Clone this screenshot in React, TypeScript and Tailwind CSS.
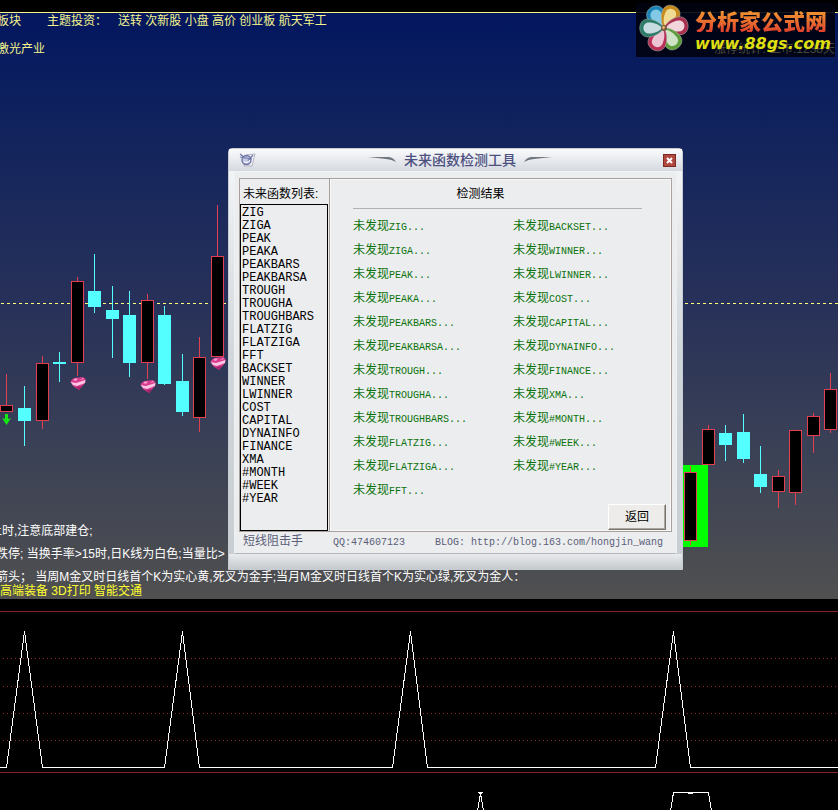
import { type ReactNode } from 'react'

type Candle = {
  x: number
  top: number
  bottom: number
  high: number
  low: number
  up?: boolean
}

const candles: Candle[] = [
  { x: 0, top: 405, bottom: 411, high: 374, low: 411, up: true },
  { x: 18, top: 408, bottom: 421, high: 386, low: 446 },
  { x: 36, top: 363, bottom: 420, high: 356, low: 429, up: true },
  { x: 53, top: 362, bottom: 364, high: 352, low: 382 },
  { x: 71, top: 281, bottom: 362, high: 277, low: 376, up: true },
  { x: 88, top: 291, bottom: 307, high: 254, low: 313 },
  { x: 106, top: 310, bottom: 319, high: 286, low: 358 },
  { x: 123, top: 315, bottom: 363, high: 291, low: 377 },
  { x: 141, top: 300, bottom: 362, high: 294, low: 379, up: true },
  { x: 158, top: 315, bottom: 384, high: 306, low: 385 },
  { x: 176, top: 381, bottom: 412, high: 354, low: 416 },
  { x: 193, top: 357, bottom: 417, high: 337, low: 432, up: true },
  { x: 211, top: 256, bottom: 356, high: 205, low: 357, up: true },
  { x: 684, top: 472, bottom: 540, high: 466, low: 545, up: true },
  { x: 702, top: 429, bottom: 464, high: 425, low: 465, up: true },
  { x: 719, top: 433, bottom: 445, high: 425, low: 461 },
  { x: 737, top: 432, bottom: 459, high: 414, low: 463 },
  { x: 754, top: 474, bottom: 487, high: 446, low: 493 },
  { x: 772, top: 476, bottom: 491, high: 470, low: 508, up: true },
  { x: 789, top: 430, bottom: 492, high: 430, low: 505, up: true },
  { x: 807, top: 416, bottom: 435, high: 413, low: 453, up: true },
  { x: 824, top: 389, bottom: 429, high: 373, low: 433, up: true },
]

const gems = [
  { x: 78, y: 383 },
  { x: 148, y: 386 },
  { x: 218, y: 363 },
]

const functions = [
  'ZIG', 'ZIGA', 'PEAK', 'PEAKA', 'PEAKBARS', 'PEAKBARSA', 'TROUGH', 'TROUGHA',
  'TROUGHBARS', 'FLATZIG', 'FLATZIGA', 'FFT', 'BACKSET', 'WINNER', 'LWINNER', 'COST',
  'CAPITAL', 'DYNAINFO', 'FINANCE', 'XMA', '#MONTH', '#WEEK', '#YEAR',
]

export default function App() {
  return (
    <div className="relative flex min-h-screen flex-col overflow-hidden bg-black font-['Liberation_Sans','Noto_Sans_CJK_SC',sans-serif] text-xs">
      <PriceChart />
      <IndicatorChart />
      <SiteBadge />
      <DetectorDialog />
    </div>
  )
}

function PriceChart() {
  return (
    <section className="relative mt-3 flex h-[587px] flex-col overflow-hidden border-t border-[#f3f38a] bg-linear-to-b from-[#03165f] via-[#283159] to-[#505050]">
      <CandleLayer />
      <div className="relative -ml-[3px] flex whitespace-pre leading-4 text-[#f4f48c]">
        <span className="w-[50px]">板块</span>
        <span className="w-[71px]">主题投资：</span>
        <span>送转 次新股 小盘 高价 创业板 航天军工</span>
      </div>
      <p className="relative -ml-[3px] mt-3 leading-4 text-[#f4f48c]">激光产业</p>

      <div className="relative mt-auto whitespace-nowrap pb-0.5 leading-[15px] text-white">
        <p className="-ml-2.5">上时,注意底部建仓;</p>
        <p className="-ml-1 mt-2">跌停; 当换手率&gt;15时,日K线为白色;当量比&gt;</p>
        <p className="-ml-1 mt-2">箭头； 当周M金叉时日线首个K为实心黄,死叉为金手;当月M金叉时日线首个K为实心绿,死叉为金人：</p>
        <p className="leading-3 text-[#ffff30]">高端装备 3D打印 智能交通</p>
      </div>
    </section>
  )
}

function CandleLayer() {
  return (
    <svg className="absolute inset-0 h-full w-full" shapeRendering="crispEdges" aria-hidden="true">
      {/* prices are plotted in page rows, the section starts at row 13 */}
      <g transform="translate(0 -13)">
        <line x1="1" x2="100%" y1="303.5" y2="303.5" stroke="#ffff80" strokeDasharray="3 3" />
        <rect x="683" y="465" width="25" height="82" fill="#00ff00" />
        {candles.map((c) => (
          <g key={c.x} stroke={c.up ? '#e04050' : '#54ffff'}>
            <line x1={c.x + 6.5} x2={c.x + 6.5} y1={c.high} y2={c.low} />
            {c.up ? (
              <rect x={c.x + 0.5} y={c.top + 0.5} width="12" height={c.bottom - c.top} fill="#000" />
            ) : (
              <rect x={c.x} y={c.top} width="13" height={c.bottom - c.top} fill="#54ffff" stroke="none" />
            )}
          </g>
        ))}
        {gems.map((g) => (
          <g key={g.x} transform={`translate(${g.x} ${g.y})`} shapeRendering="auto">
            <path d="M-7.5 -2 -4 -5 5 -6 7.5 -4 7 0 1 7 -5 3z" fill="#d73b8c" />
            <path d="M-7.5 -1 -2 0 7.5 -3 7 0 -1 3 -5 2z" fill="#ffc4e4" />
            <path d="M-5 -3 -3 -4.5 0 -4.5 -2 -2z M2 -3 5 -5 6 -4z" fill="#ff9ad0" />
            <path d="M-2 4 1 7 4 3z" fill="#a8216a" />
          </g>
        ))}
        <path d="M5 414h3v5l3-1-4.500 7L2 418l3 1z" fill="#16e816" shapeRendering="auto" />
      </g>
    </svg>
  )
}

function IndicatorChart() {
  return (
    <section className="grow">
      <svg className="block h-[211px] w-full" shapeRendering="crispEdges" role="img" aria-label="指标">
        <g stroke="#8a2424">
          <line x1="0" x2="100%" y1="12.5" y2="12.5" />
          <line x1="0" x2="100%" y1="173.5" y2="173.5" />
        </g>
        <g stroke="#8a2a2a" strokeDasharray="1 3">
          <line x1="3" x2="100%" y1="59.5" y2="59.5" />
          <line x1="3" x2="100%" y1="87.5" y2="87.5" />
          <line x1="3" x2="100%" y1="114.5" y2="114.5" />
          <line x1="3" x2="100%" y1="141.5" y2="141.5" />
        </g>
        <g fill="none" stroke="#fff">
          <path d="M0 168.5H6.5L24.5 32.5 42.5 168.5H164.5L182.5 32.5 199.5 168.5H392.5L410.5 32.5 427.5 168.5H655.5L673.5 32.5 690.5 168.5H4000" />
          <path d="M477.5 212 480.5 194.5 483.5 212M478 193.5h5M479 194.5h3" />
          <path d="M670.5 212 673.5 193.5H708.5L711.5 212M688 194.5h5" />
        </g>
      </svg>
    </section>
  )
}

function SiteBadge() {
  const petals = [
    { angle: -32, outer: '#1b83b5', inner: '#83c9e6' },
    { angle: 26, outer: '#c98a1c', inner: '#f1dc96' },
    { angle: 82, outer: '#a9304f', inner: '#f3d6dc' },
    { angle: 146, outer: '#5f9e3c', inner: '#cfe4c6' },
    { angle: 206, outer: '#b92f58', inner: '#ecc4d4' },
    { angle: 270, outer: '#2c7b68', inner: '#c6dce0' },
  ]

  return (
    <a
      href="#"
      className="absolute right-[3px] top-[3px] flex h-[54px] w-[199px] items-center bg-[#00020f]/90"
    >
      <svg className="h-[54px] w-[56px] shrink-0" viewBox="0 0 56 54" aria-hidden="true">
        {petals.map((p) => (
          <g key={p.angle} transform={`rotate(${p.angle} 28 25)`}>
            <path d="M28 25C23 22 19 15 19 9 19 -2 37 -2 37 9 37 15 33 22 28 25z" fill={p.outer} stroke="#aeb8a8" strokeWidth=".5" />
            <path d="M28 23C24 20 22.500 14 22.500 10 22.500 2.500 33.500 2.500 33.500 10 33.500 14 32 20 28 23z" fill={p.inner} />
          </g>
        ))}
        <circle cx="28" cy="25" r="3" fill="#7a5a3e" />
        <circle cx="27.5" cy="24.5" r="1.4" fill="#e7b36b" />
      </svg>
      <span className="absolute bottom-0 right-0 text-xs leading-4 text-[#47473c]">
        涨停统计: 上市:1238天
      </span>
      <span className="relative ml-[3px] flex flex-col whitespace-nowrap pt-1">
        <span className="bg-linear-to-b from-[#f0a030] to-[#e0402c] bg-clip-text font-['Noto_Sans_CJK_SC',sans-serif] text-[22px] leading-6 font-black text-transparent">
          分析家公式网
        </span>
        <span className="font-['DejaVu_Sans',sans-serif] text-base leading-6 font-bold italic text-[#dede10]">
          www.88gs.com
        </span>
      </span>
    </a>
  )
}

function DetectorDialog() {
  return (
    <div
      role="dialog"
      aria-labelledby="detector-title"
      className="absolute left-[228px] top-[148px] flex w-[455px] flex-col rounded-t-sm border border-[#c6ccd4] bg-linear-to-b from-[#f6f7f9] via-[#d0d6da] to-[#c8cdd1] text-black"
    >
      <header className="flex h-[22px] items-center bg-linear-to-b from-[#fbfbfc] via-[#e8eaee] to-[#d5d9e0] pl-2.5 pr-1.5">
        <TitleIcon />
        <div className="flex flex-1 items-center justify-center gap-2">
          <svg className="h-2 w-7" viewBox="0 0 28 8" aria-hidden="true">
            <path d="M0 1H20Q25 1 28 6 24 3.500 18 3z" fill="#70757e" />
          </svg>
          <h1 id="detector-title" className="text-sm leading-4 font-medium text-[#4c5080]">
            未来函数检测工具
          </h1>
          <svg className="h-2 w-7" viewBox="0 0 28 8" aria-hidden="true">
            <path d="M28 1H8Q3 1 0 6 4 3.500 10 3z" fill="#70757e" />
          </svg>
        </div>
        <button
          type="button"
          aria-label="关闭"
          className="flex size-[13px] items-center justify-center border border-[#7c2a24] bg-[#b1483f]"
        >
          <svg className="size-[7px]" viewBox="0 0 7 7" aria-hidden="true">
            <path d="M1 1l5 5M6 1 1 6" stroke="#fff" strokeWidth="2" />
          </svg>
        </button>
      </header>

      <div className="mx-[5px] rounded-t border border-[#eef0f2] border-b-[#b4b8bc] bg-[#ecedef] px-1 pt-1.5">
        <div className="flex h-[354px] border border-[#a8a09c]">
          <section className="flex w-[90px] shrink-0 flex-col border-r border-[#a8a09c] pr-px">
            <h2 className="whitespace-nowrap pl-[3px] pt-[5px] leading-5">未来函数列表:</h2>
            <ul className="flex-1 border border-black pl-px pt-0.5 font-['Liberation_Mono',monospace] leading-[13px]">
              {functions.map((name) => (
                <li key={name}>{name}</li>
              ))}
            </ul>
          </section>

          <section className="relative flex flex-1 flex-col border border-[#f8f8f8] pl-[22px]">
            <h2 className="pr-[62px] text-center leading-7">检测结果</h2>
            <hr className="mr-7 border-[#b2b2b6]" />
            <ul className="mt-[7px] grid grid-flow-col grid-cols-[160px_1fr] grid-rows-12 font-['Liberation_Mono','Noto_Sans_CJK_SC',monospace] text-[10px] leading-6 text-[#0a720a]">
              {functions.map((name) => (
                <li key={name} className="whitespace-nowrap">
                  <Han>未发现</Han>
                  {name}...
                </li>
              ))}
            </ul>
            <button
              type="button"
              className="absolute bottom-0 right-1 h-[26px] w-[58px] border border-white border-r-[#77736c] border-b-[#77736c] bg-[#edecea] leading-5 shadow-[inset_-1px_-1px_0_#aca8a0]"
            >
              返回
            </button>
          </section>
        </div>
        <footer className="flex h-[21px] items-center whitespace-nowrap pl-1 font-['Liberation_Mono','Noto_Sans_CJK_SC',monospace] text-[10px] text-[#5a5e78]">
          <span className="w-[90px]">
            <Han>短线阻击手</Han>
          </span>
          <span className="w-[102px]">QQ:474607123</span>
          <span>BLOG: http://blog.163.com/hongjin_wang</span>
        </footer>
      </div>
      <div className="h-[15px] bg-linear-to-b from-[#e9ebed] to-[#c6cacd]" />
    </div>
  )
}

// Chinese text runs at full size beside the narrower Latin letters
function Han({ children }: { children: ReactNode }) {
  return <span className="text-xs leading-none">{children}</span>
}

function TitleIcon() {
  return (
    <svg className="h-4 w-[18px]" viewBox="0 0 18 16" fill="none" aria-hidden="true">
      <path d="M7 3 16 2 13 14 5 14z" fill="#f4f4fa" stroke="#b4b4c0" />
      <circle cx="7.5" cy="8" r="4.5" fill="#c3c8e6" stroke="#6870a4" strokeWidth="1.3" />
      <path d="M1 2 5 5M1 5 13 7M9 9 14 3" stroke="#7077a8" strokeWidth="1.2" />
      <path d="M5 10Q8 12 11 8" stroke="#fff" />
    </svg>
  )
}
